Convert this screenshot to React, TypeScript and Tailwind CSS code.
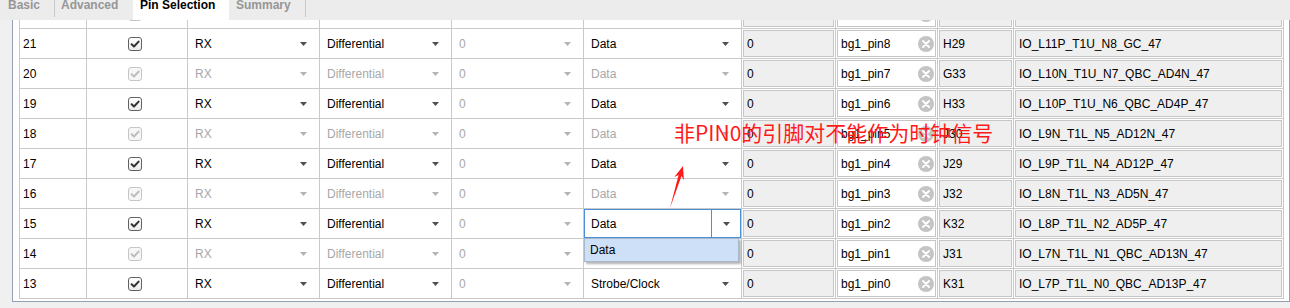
import React from "react";

type Row = {
  n: number;
  en: boolean;
  pin: string;
  site: string;
  io: string;
  type?: string;
  focus?: boolean;
  ghost?: boolean;
};

const rows: Row[] = [
  { n: 22, en: false, pin: "", site: "", io: "", ghost: true },
  { n: 21, en: true, pin: "bg1_pin8", site: "H29", io: "IO_L11P_T1U_N8_GC_47" },
  { n: 20, en: false, pin: "bg1_pin7", site: "G33", io: "IO_L10N_T1U_N7_QBC_AD4N_47" },
  { n: 19, en: true, pin: "bg1_pin6", site: "H33", io: "IO_L10P_T1U_N6_QBC_AD4P_47" },
  { n: 18, en: false, pin: "bg1_pin5", site: "J30", io: "IO_L9N_T1L_N5_AD12N_47" },
  { n: 17, en: true, pin: "bg1_pin4", site: "J29", io: "IO_L9P_T1L_N4_AD12P_47" },
  { n: 16, en: false, pin: "bg1_pin3", site: "J32", io: "IO_L8N_T1L_N3_AD5N_47" },
  { n: 15, en: true, pin: "bg1_pin2", site: "K32", io: "IO_L8P_T1L_N2_AD5P_47", focus: true },
  { n: 14, en: false, pin: "bg1_pin1", site: "J31", io: "IO_L7N_T1L_N1_QBC_AD13N_47" },
  { n: 13, en: true, pin: "bg1_pin0", site: "K31", io: "IO_L7P_T1L_N0_QBC_AD13P_47", type: "Strobe/Clock" },
];

const cell = "h-[30px] border-r border-b border-[#c9c9c9] bg-white";

function Caret({ on }: { on: boolean }) {
  return (
    <svg width="7" height="4" viewBox="0 0 7 4" className="shrink-0">
      <polygon points="0,0 7,0 3.5,4" fill={on ? "#505050" : "#b4b4b4"} />
    </svg>
  );
}

function Check({ on }: { on: boolean }) {
  return (
    <div
      className={
        "w-[14px] h-[14px] rounded-[3px] border flex items-center justify-center " +
        (on
          ? "border-[#626262] bg-gradient-to-b from-white to-[#ececec]"
          : "border-[#c6c6c6] bg-[#f6f6f6]")
      }
    >
      <svg width="12" height="12" viewBox="0 0 12 12">
        <path
          d="M2.6 6.2 L5 8.5 L9.6 3.6"
          fill="none"
          stroke={on ? "#333333" : "#bdbdbd"}
          strokeWidth="2"
          strokeLinecap="round"
          strokeLinejoin="round"
        />
      </svg>
    </div>
  );
}

function SelectCell({ text, on }: { text: string; on: boolean }) {
  return (
    <div className={cell + " flex items-center justify-between pl-[7px] pr-[12px]"}>
      <span className={on ? "text-black" : "text-[#a8a8a8]"}>{text}</span>
      <Caret on={on} />
    </div>
  );
}

function BoxCell({ children, white }: { children: React.ReactNode; white?: boolean }) {
  return (
    <div className={cell + " p-[1px]"}>
      <div
        className={
          "h-full border border-[#c6c6c6] flex items-center pl-[3px] text-black " +
          (white ? "bg-white" : "bg-[#efefef]")
        }
      >
        {children}
      </div>
    </div>
  );
}

function ClearIcon() {
  return (
    <svg width="16" height="16" viewBox="0 0 16 16" className="shrink-0">
      <circle cx="8" cy="8" r="8" fill="#c4c4c4" />
      <path d="M5 5 L11 11 M11 5 L5 11" stroke="#ffffff" strokeWidth="2" strokeLinecap="round" />
    </svg>
  );
}

function FocusCombo() {
  return (
    <div className="h-[30px] border-r border-b border-[#c9c9c9] bg-white relative">
      <div className="h-full border border-[#4a8fd8] flex">
        <div className="flex-1 flex items-center pl-[6px] text-black">Data</div>
        <div className="w-[29px] border-l border-[#4a8fd8] flex items-center justify-center">
          <Caret on={true} />
        </div>
      </div>
      <div className="absolute z-10 left-0 top-full w-[155px] h-[24px] border border-[#a9b9cc] bg-[#cde0f7] flex items-center pl-[5px] text-black shadow-[2px_2px_2px_rgba(0,0,0,0.3)]">
        Data
      </div>
    </div>
  );
}

function TableRow({ r }: { r: Row }) {
  const g = r.ghost;
  return (
    <>
      <div className={cell + " flex items-center pl-[3px] text-black"}>{g ? "" : r.n}</div>
      <div className={cell + " flex items-center justify-center pr-[5px]"}>
        <Check on={r.en} />
      </div>
      <SelectCell text={g ? "" : "RX"} on={r.en} />
      <SelectCell text={g ? "" : "Differential"} on={r.en} />
      <SelectCell text={g ? "" : "0"} on={false} />
      {r.focus ? <FocusCombo /> : <SelectCell text={g ? "" : r.type ?? "Data"} on={r.en} />}
      <BoxCell>{g ? "" : "0"}</BoxCell>
      <BoxCell white>
        <div className="flex-1 flex items-center justify-between pr-[1px]">
          <span>{r.pin}</span>
          <ClearIcon />
        </div>
      </BoxCell>
      <BoxCell>{r.site}</BoxCell>
      <BoxCell>{r.io}</BoxCell>
    </>
  );
}

function Tabs() {
  return (
    <div className="flex h-[20px] bg-[#ececec] font-bold text-[12px] leading-[12px]">
      <div className="w-[55px] pl-[8px] border-r border-[#c8c8c8] h-[17px] text-[#969696]">
        <span className="block -mt-[1px]">Basic</span>
      </div>
      <div className="w-[78px] pl-[6px] text-[#969696]">
        <span className="block -mt-[1px]">Advanced</span>
      </div>
      <div className="w-[96px] pl-[7px] bg-white text-black">
        <span className="block -mt-[1px]">Pin Selection</span>
      </div>
      <div className="w-[77px] pl-[7px] border-r border-[#c8c8c8] h-[17px] text-[#969696]">
        <span className="block -mt-[1px]">Summary</span>
      </div>
    </div>
  );
}

export default function App() {
  return (
    <div className="relative w-[1290px] h-[308px] overflow-hidden bg-[#f0f0f0] font-['Liberation_Sans',Arial,sans-serif] text-[12px]">
      <Tabs />
      <div className="ml-[12px] w-[1278px] border-x border-b border-[#94a0b4] bg-white">
        <div className="h-[281px] overflow-hidden pl-[6px]">
          <div className="-mt-[21px] w-[1265px] grid grid-cols-[67px_101px_132px_132px_132px_158px_94px_102px_76px_270px] border-l border-[#c9c9c9]">
            {rows.map((r) => (
              <TableRow key={r.n} r={r} />
            ))}
          </div>
        </div>
      </div>

      <div className="absolute left-[674px] top-[122px] z-20 text-[21px] leading-none text-[#ff1a1a] font-['Noto_Sans_CJK_SC',sans-serif] whitespace-nowrap pointer-events-none">
        非PIN0的引脚对不能作为时钟信号
      </div>
      <svg
        className="absolute left-0 top-0 z-20 pointer-events-none"
        width="1290"
        height="308"
        viewBox="0 0 1290 308"
      >
        <polygon
          points="670,208 678.6,175.1 674.4,176.9 683,166 683.9,179.9 681.5,176"
          fill="#ff1a1a"
        />
      </svg>
    </div>
  );
}
